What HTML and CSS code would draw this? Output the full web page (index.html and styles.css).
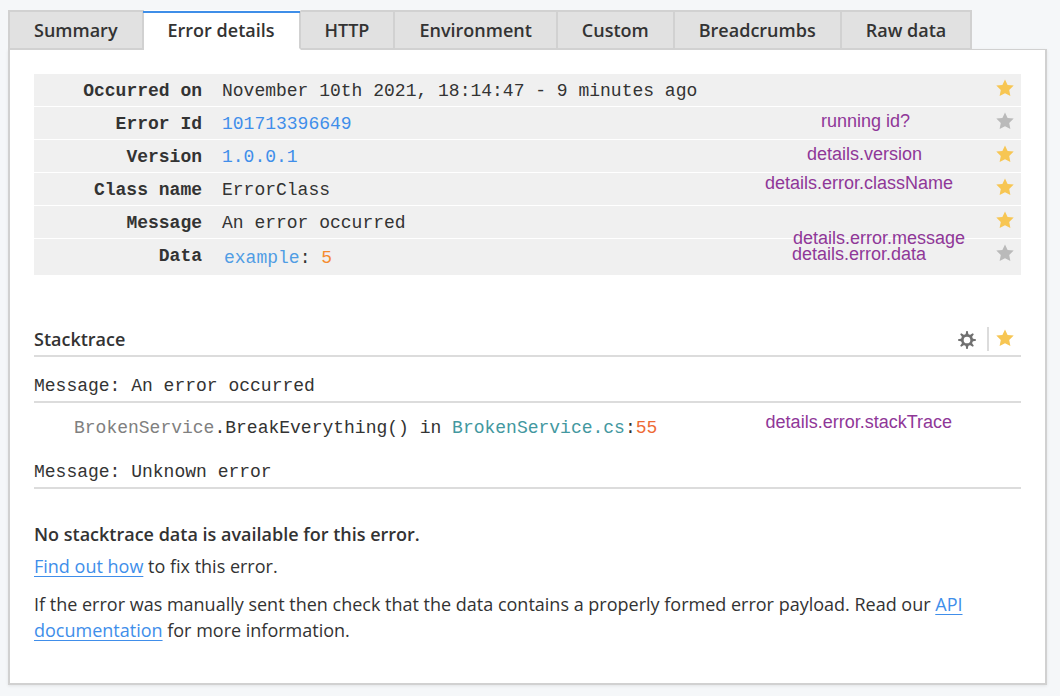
FILE: index.html
```html
<!DOCTYPE html>
<html lang="en">
<head>
<meta charset="utf-8">
<title>Error details</title>
<link rel="stylesheet" href="styles.css">
</head>
<body>
<svg class="sprite" aria-hidden="true">
  <symbol id="star" viewBox="0 0 18 18"><path d="M9 .4l2.6 5.5 6.1.7-4.5 4.3 1.2 6.1L9 14.2l-5.4 2.8 1.2-6.1L.3 6.6l6.1-.7z"/></symbol>
  <symbol id="gear" viewBox="0 0 18 18">
    <g fill="currentColor"><path id="tooth" d="M7.4 4L8.3.1h1.4L10.6 4z"/><path d="M7.4 4L8.3.1h1.4L10.6 4z" transform="rotate(45 9 9)"/><path d="M7.4 4L8.3.1h1.4L10.6 4z" transform="rotate(90 9 9)"/><path d="M7.4 4L8.3.1h1.4L10.6 4z" transform="rotate(135 9 9)"/><path d="M7.4 4L8.3.1h1.4L10.6 4z" transform="rotate(180 9 9)"/><path d="M7.4 4L8.3.1h1.4L10.6 4z" transform="rotate(225 9 9)"/><path d="M7.4 4L8.3.1h1.4L10.6 4z" transform="rotate(270 9 9)"/><path d="M7.4 4L8.3.1h1.4L10.6 4z" transform="rotate(315 9 9)"/></g>
    <circle cx="9" cy="9" r="4.7" fill="none" stroke="currentColor" stroke-width="2.7"/>
  </symbol>
</svg>
<nav class="tabs" role="tablist">
  <button class="tab" role="tab">Summary</button>
  <button class="tab tab-active" role="tab" aria-selected="true">Error details</button>
  <button class="tab" role="tab">HTTP</button>
  <button class="tab" role="tab">Environment</button>
  <button class="tab" role="tab">Custom</button>
  <button class="tab" role="tab">Breadcrumbs</button>
  <button class="tab" role="tab">Raw data</button>
</nav>
<main class="panel">
  <table class="details">
    <tbody>
      <tr><th scope="row">Occurred on</th><td>November 10th 2021, 18:14:47 - 9 minutes ago</td><td class="pin"><button class="star star-on" aria-label="Unpin occurred on"><svg><use href="#star"/></svg></button></td></tr>
      <tr><th scope="row">Error Id</th><td><a class="value-link" href="#">101713396649</a></td><td class="pin"><button class="star" aria-label="Pin error id"><svg><use href="#star"/></svg></button></td></tr>
      <tr><th scope="row">Version</th><td><a class="value-link" href="#">1.0.0.1</a></td><td class="pin"><button class="star star-on" aria-label="Unpin version"><svg><use href="#star"/></svg></button></td></tr>
      <tr><th scope="row">Class name</th><td>ErrorClass</td><td class="pin"><button class="star star-on" aria-label="Unpin class name"><svg><use href="#star"/></svg></button></td></tr>
      <tr><th scope="row">Message</th><td>An error occurred</td><td class="pin"><button class="star star-on" aria-label="Unpin message"><svg><use href="#star"/></svg></button></td></tr>
      <tr><th scope="row">Data</th><td><div class="json"><span class="json-key">example</span>: <span class="json-number">5</span></div></td><td class="pin"><button class="star" aria-label="Pin data"><svg><use href="#star"/></svg></button></td></tr>
    </tbody>
  </table>

  <section>
    <header class="section-head">
      <h2 class="section-title">Stacktrace</h2>
      <div class="section-tools">
        <button class="gear" aria-label="Stacktrace settings"><svg><use href="#gear"/></svg></button>
        <button class="star star-on" aria-label="Unpin stacktrace"><svg><use href="#star"/></svg></button>
      </div>
    </header>
    <p class="trace-message">Message: An error occurred</p>
    <p class="frame"><span class="frame-class">BrokenService</span>.BreakEverything() in <span class="frame-file">BrokenService.cs</span>:<span class="frame-line">55</span></p>
    <p class="trace-message">Message: Unknown error</p>
    <div class="notice">
      <h3 class="notice-title">No stacktrace data is available for this error.</h3>
      <p class="notice-fix"><a class="link" href="#">Find out how</a> to fix this error.</p>
      <p class="notice-text">If the error was manually sent then check that the data contains a properly formed error payload. Read our <a class="link" href="#">API documentation</a> for more information.</p>
    </div>
  </section>

  <span class="note note-id">running id?</span>
  <span class="note note-version">details.version</span>
  <span class="note note-class">details.error.className</span>
  <span class="note note-message">details.error.message</span>
  <span class="note note-data">details.error.data</span>
  <span class="note note-trace">details.error.stackTrace</span>
</main>
</body>
</html>
```

FILE: styles.css
```css
* {
  box-sizing: border-box;
}

body {
  margin: 0;
  padding: 10px 13px 11px 8px;
  background: #f5f7f9;
  color: #333;
  font: 18px/26px "Open Sans", "Noto Sans", sans-serif;
}

h2, h3, p {
  margin: 0;
}

button {
  padding: 0;
  border: 0;
  background: none;
  color: inherit;
  font: inherit;
  cursor: pointer;
}

.sprite {
  display: none;
}

/* Tabs */
.tabs {
  position: relative;
  z-index: 1;
  display: flex;
  height: 40px;
}

.tab {
  padding: 0 24px;
  border: 2px solid #d1d1d1;
  border-left-width: 0;
  background: #e1e1e1;
  font-weight: 600;
  white-space: nowrap;
}

.tab:first-child {
  border-left-width: 2px;
}

.tab-active {
  position: relative;
  border-top-color: #fff;
  border-bottom-color: #fff;
  background: #fff;
}

.tab-active::before {
  position: absolute;
  top: -1px;
  left: -1px;
  right: -1px;
  height: 2px;
  background: #3f8ee8;
  content: "";
}

/* Panel */
.panel {
  position: relative;
  margin-top: -1px;
  padding: 24px 24px 40px;
  border: 2px solid #d1d1d1;
  border-top-width: 1px;
  background: #fff;
  box-shadow: 0 1px 3px rgba(0, 0, 0, 0.08);
}

.details {
  width: 100%;
  border-spacing: 0;
  background: #f0f0f0;
  font-family: "Liberation Mono", "Courier New", monospace;
}

.details th,
.details td {
  padding: 4px 10px 2px;
  border-bottom: 1px solid #fff;
  text-align: left;
  vertical-align: top;
}

.details tr:last-child th,
.details tr:last-child td {
  border-bottom: 0;
}

.details th {
  width: 178px;
  font-weight: 700;
  text-align: right;
  white-space: nowrap;
}

.details .pin {
  width: 34px;
  padding: 5px 7px 0 0;
  text-align: right;
}

.json {
  padding: 2px;
}

.json-key {
  color: #509de4;
}

.json-number {
  color: #f58b2e;
}

.value-link {
  color: #408eea;
  text-decoration: none;
}

.star {
  display: inline-block;
  width: 18px;
  height: 18px;
  color: #bababa;
  line-height: 0;
  vertical-align: top;
}

.star-on {
  color: #f7c653;
}

.star svg,
.gear svg {
  display: block;
  width: 18px;
  height: 18px;
  fill: currentColor;
}

/* Stacktrace */
.section-head {
  display: flex;
  align-items: center;
  justify-content: space-between;
  height: 35px;
  margin-top: 47px;
  border-bottom: 2px solid #dcdcdc;
}

.section-title,
.notice-title {
  font-size: 18px;
  font-weight: 600;
}

.section-tools {
  display: flex;
  padding-right: 7px;
}

.section-tools .star {
  margin-top: 2px;
}

.gear {
  height: 24px;
  margin-right: 7px;
  padding: 2px 11px 0 0;
  border-right: 2px solid #dcdcdc;
  color: #707070;
}

.trace-message,
.frame {
  font-family: "Liberation Mono", "Courier New", monospace;
}

.trace-message {
  padding: 16px 0 2px;
  border-bottom: 2px solid #dcdcdc;
}

.frame {
  padding: 12px 40px 2px;
}

.frame-class {
  color: #808080;
}

.frame-file {
  color: #43989f;
}

.frame-line {
  color: #ee6a35;
}

.notice {
  padding-top: 32px;
}

.notice-fix {
  margin-top: 6px;
}

.notice-text {
  margin-top: 12px;
}

.link {
  color: #408eea;
  text-decoration: underline;
  text-decoration-skip-ink: none;
  text-decoration-thickness: 1px;
  text-underline-offset: 3px;
}

/* Annotations laid over the panel */
.note {
  position: absolute;
  color: #8f3798;
  font: 18px/20px "Liberation Sans", Arial, sans-serif;
  white-space: nowrap;
}

.note-id {
  top: 61px;
  right: 135px;
}

.note-version {
  top: 94px;
  right: 123px;
}

.note-class {
  top: 123px;
  right: 92px;
}

.note-message {
  top: 178px;
  right: 80px;
}

.note-data {
  top: 194px;
  right: 119px;
}

.note-trace {
  top: 362px;
  right: 93px;
}
```
